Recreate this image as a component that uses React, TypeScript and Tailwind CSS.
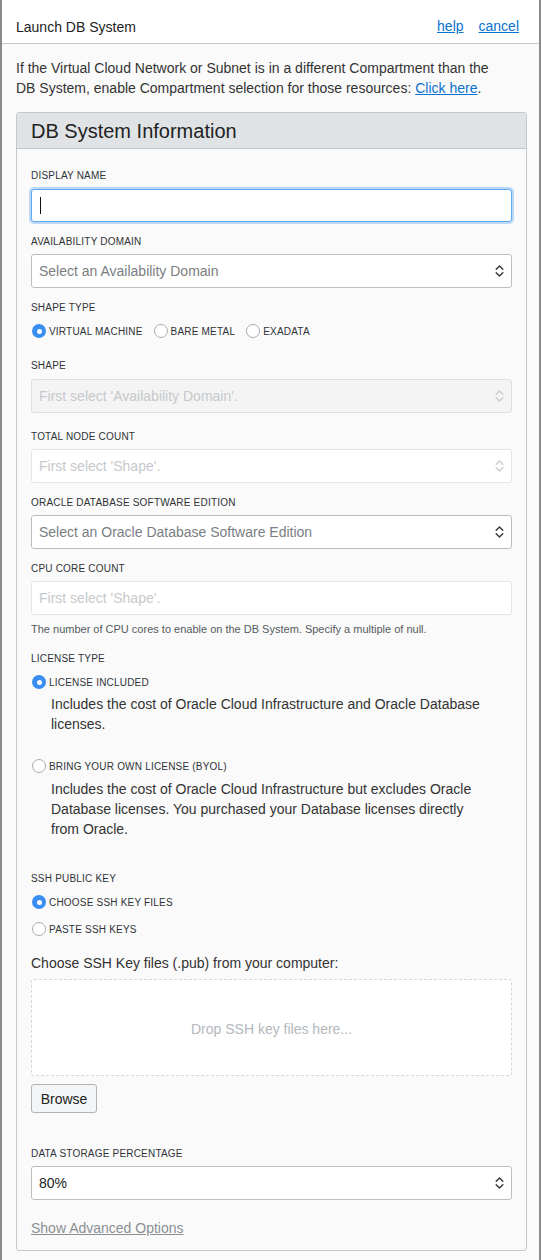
import React from "react";

const font = { fontFamily: '"Liberation Sans", Arial, sans-serif' };

function Chevrons({ light = false }: { light?: boolean }) {
  const c = light ? "#c9cdd1" : "#333333";
  return (
    <svg width="9" height="14" viewBox="0 0 9 14" fill="none">
      <path d="M1.2 5.2 L4.5 2 L7.8 5.2" stroke={c} strokeWidth="1.4" strokeLinecap="round" strokeLinejoin="round" />
      <path d="M1.2 8.8 L4.5 12 L7.8 8.8" stroke={c} strokeWidth="1.4" strokeLinecap="round" strokeLinejoin="round" />
    </svg>
  );
}

function Label({ children, className = "" }: { children: React.ReactNode; className?: string }) {
  return (
    <div className={`text-[10px] leading-[12px] tracking-[0.2px] uppercase text-[#2f3337] ${className}`}>
      {children}
    </div>
  );
}

function Radio({ checked, label }: { checked?: boolean; label: string }) {
  return (
    <div className="flex items-center h-[20px]">
      {checked ? (
        <span className="w-[14px] h-[14px] rounded-full bg-[#3a8ef2] flex items-center justify-center ml-[1px]">
          <span className="w-[5px] h-[5px] rounded-full bg-white" />
        </span>
      ) : (
        <span className="w-[14px] h-[14px] rounded-full bg-white border border-[#a9adb1] ml-[1px]" />
      )}
      <span className="ml-[3px] text-[10px] tracking-[0.2px] uppercase text-[#2f3337]">{label}</span>
    </div>
  );
}

function Select({ text, className = "", muted = false }: { text: string; className?: string; muted?: boolean }) {
  return (
    <div
      className={`h-[34px] rounded-[3px] border border-[#b9bec3] bg-white flex items-center justify-between pl-[7px] pr-[7px] text-[14px] ${
        muted ? "text-[#7a7e82]" : "text-[#222]"
      } ${className}`}
    >
      <span>{text}</span>
      <Chevrons />
    </div>
  );
}

export default function App() {
  return (
    <div style={font} className="w-[541px] h-[1260px] bg-[#fafafa] border-l-2 border-r-2 border-[#8a8a8a] text-[#333] overflow-hidden">
      <div className="h-[44px] bg-white border-b border-[#c3c7cb] flex items-start justify-between pl-[14px] pr-5 pt-[17px] text-[14px] leading-5">
        <span className="text-[#222]">Launch DB System</span>
        <div className="flex gap-[15px] -mt-[1px]">
          <a className="text-[#0a72d0] underline">help</a>
          <a className="text-[#0a72d0] underline">cancel</a>
        </div>
      </div>

      <p className="mt-[14px] pl-[14px] pr-[36px] text-[14px] leading-5 text-[#333]">
        If the Virtual Cloud Network or Subnet is in a different Compartment than the DB System, enable Compartment selection for those resources:{" "}
        <a className="text-[#0a72d0] underline">Click here</a>.
      </p>

      <div className="mt-[14px] ml-[14px] w-[511px] border border-[#c3c8cd] rounded-[3px] bg-[#fafafa]">
        <div className="h-[36px] bg-[#dfe3e6] border-b border-[#c3c8cd] pl-[14px] text-[20px] leading-[37px] text-[#222] rounded-t-[3px]">
          DB System Information
        </div>
        <div className="px-[14px] pt-[21px] pb-[12px]">
          <Label>Display Name</Label>
          <div className="mt-[7px] h-[33px] rounded-[3px] border border-[#5ea9f3] bg-white shadow-[0_0_0_2px_rgba(110,175,245,0.45)] flex items-center pl-[8px]">
            <span className="w-[1px] h-[17px] bg-[#111]" />
          </div>

          <Label className="mt-[14px]">Availability Domain</Label>
          <Select className="mt-[6px]" text="Select an Availability Domain" muted />

          <Label className="mt-[14px]">Shape Type</Label>
          <div className="mt-[7px] flex gap-[10px]">
            <Radio checked label="Virtual Machine" />
            <Radio label="Bare Metal" />
            <Radio label="Exadata" />
          </div>

          <Label className="mt-[19px]">Shape</Label>
          <div className="mt-[7px] h-[34px] rounded-[3px] border border-[#dcdfe2] bg-[#f4f4f4] flex items-center justify-between px-[7px] text-[14px] text-[#c6c9cc]">
            <span>First select 'Availability Domain'.</span>
            <Chevrons light />
          </div>

          <Label className="mt-[18px]">Total Node Count</Label>
          <div className="mt-[6px] h-[34px] rounded-[3px] border border-[#e3e5e7] bg-white flex items-center justify-between px-[7px] text-[14px] text-[#c6c9cc]">
            <span>First select 'Shape'.</span>
            <Chevrons light />
          </div>

          <Label className="mt-[14px]">Oracle Database Software Edition</Label>
          <Select className="mt-[6px]" text="Select an Oracle Database Software Edition" muted />

          <Label className="mt-[14px]">CPU Core Count</Label>
          <div className="mt-[6px] h-[34px] rounded-[3px] border border-[#e3e5e7] bg-white flex items-center px-[7px] text-[14px] text-[#c6c9cc]">
            First select 'Shape'.
          </div>
          <div className="mt-[7px] text-[11px] leading-[14px] text-[#555a5e]">
            The number of CPU cores to enable on the DB System. Specify a multiple of null.
          </div>

          <Label className="mt-[17px]">License Type</Label>
          <div className="mt-[7px]">
            <Radio checked label="License Included" />
          </div>
          <div className="mt-[2px] pl-[20px] pr-[20px] text-[14px] leading-5 text-[#333]">
            Includes the cost of Oracle Cloud Infrastructure and Oracle Database licenses.
          </div>
          <div className="mt-[22px]">
            <Radio label="Bring Your Own License (BYOL)" />
          </div>
          <div className="mt-[3px] pl-[20px] pr-[20px] text-[14px] leading-5 text-[#333]">
            Includes the cost of Oracle Cloud Infrastructure but excludes Oracle Database licenses. You purchased your Database licenses directly from Oracle.
          </div>

          <Label className="mt-[34px]">SSH Public Key</Label>
          <div className="mt-[7px]">
            <Radio checked label="Choose SSH Key Files" />
          </div>
          <div className="mt-[7px]">
            <Radio label="Paste SSH Keys" />
          </div>
          <div className="mt-[14px] text-[14px] leading-5 text-[#333]">Choose SSH Key files (.pub) from your computer:</div>
          <div className="mt-[6px] h-[97px] border border-dashed border-[#d4d7da] rounded-[3px] bg-white flex items-center justify-center pt-[4px] text-[14px] text-[#b3b8bd]">
            Drop SSH key files here...
          </div>
          <button className="mt-[8px] h-[29px] w-[66px] rounded-[3px] border border-[#aeb3b8] bg-[#f4f5f6] text-[14px] text-[#222] block pt-[1px]">
            Browse
          </button>

          <Label className="mt-[35px]">Data Storage Percentage</Label>
          <Select className="mt-[6px]" text="80%" />

          <div className="mt-[18px] text-[14px] leading-5">
            <a className="text-[#8a8f94] underline">Show Advanced Options</a>
          </div>
        </div>
      </div>
    </div>
  );
}
